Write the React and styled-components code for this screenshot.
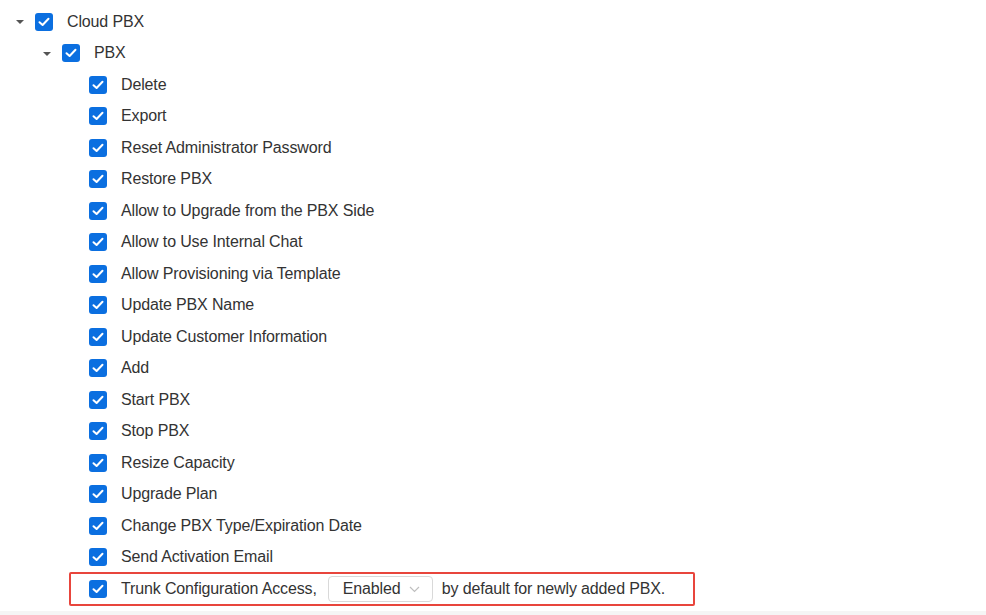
import React from 'react'
import styled, { createGlobalStyle } from 'styled-components'

const GlobalStyle = createGlobalStyle`
    html, body {
        margin: 0;
        padding: 0;
        background: #fff;
        overflow: hidden;
    }
    body {
        font-family: "Liberation Sans", Arial, sans-serif;
        color: #333;
    }
`

const Tree = styled.ul`
    list-style: none;
    margin: 0;
    padding: 6px 0 0 0;
`

const Row = styled.li`
    display: flex;
    align-items: center;
    height: 31.5px;
    padding-left: ${p => 8 + p.level * 27}px;
    font-size: 16px;
    letter-spacing: -0.14px;
    line-height: 1;
    white-space: nowrap;
`

const Switcher = styled.span`
    width: 24px;
    height: 18px;
    margin-right: 3px;
    display: flex;
    align-items: center;
    justify-content: center;
    flex: none;

    &::after {
        content: '';
        display: ${p => (p.open ? 'block' : 'none')};
        width: 0;
        height: 0;
        margin-top: 1px;
        border-left: 4px solid transparent;
        border-right: 4px solid transparent;
        border-top: 4px solid #555;
    }
`

const Box = styled.span`
    width: 18px;
    height: 18px;
    border-radius: 3px;
    background: #0b6fe0;
    display: flex;
    align-items: center;
    justify-content: center;
    flex: none;
    margin-right: 14px;
`

const Highlight = styled.div`
    display: flex;
    align-items: center;
    box-sizing: border-box;
    width: 626px;
    height: 34px;
    margin: -1px 0 -1.5px -20px;
    padding-left: 18px;
    border: 2px solid #e8453c;
    border-radius: 2px;
`

const Select = styled.span`
    display: inline-flex;
    align-items: center;
    box-sizing: border-box;
    height: 26px;
    width: 105px;
    margin: 0 9px 0 11px;
    padding: 0 12px 0 14px;
    border: 1px solid #d9d9d9;
    border-radius: 4px;
    color: #333;

    svg {
        margin-left: auto;
    }
`

const Footer = styled.div`
    position: fixed;
    left: 0;
    right: 0;
    bottom: 0;
    height: 4px;
    background: #f5f5f5;
`

const Check = () => (
    <Box>
        <svg width="12" height="10" viewBox="0 0 12 10" fill="none">
            <path d="M1.5 5.2L4.6 8L10.5 1.8" stroke="#fff" strokeWidth="2" strokeLinecap="round" strokeLinejoin="round" />
        </svg>
    </Box>
)

const items = [
    'Delete',
    'Export',
    'Reset Administrator Password',
    'Restore PBX',
    'Allow to Upgrade from the PBX Side',
    'Allow to Use Internal Chat',
    'Allow Provisioning via Template',
    'Update PBX Name',
    'Update Customer Information',
    'Add',
    'Start PBX',
    'Stop PBX',
    'Resize Capacity',
    'Upgrade Plan',
    'Change PBX Type/Expiration Date',
    'Send Activation Email',
]

export default function App() {
    return (
        <>
            <GlobalStyle />
            <Tree>
                <Row level={0}>
                    <Switcher open />
                    <Check />
                    Cloud PBX
                </Row>
                <Row level={1}>
                    <Switcher open />
                    <Check />
                    PBX
                </Row>
                {items.map(label => (
                    <Row level={2} key={label}>
                        <Switcher />
                        <Check />
                        {label}
                    </Row>
                ))}
                <Row level={2}>
                    <Switcher />
                    <Highlight>
                        <Check />
                        Trunk Configuration Access,
                        <Select>
                            Enabled
                            <svg width="11" height="7" viewBox="0 0 11 7" fill="none">
                                <path d="M1 1L5.5 5.5L10 1" stroke="#bfbfbf" strokeWidth="1.2" />
                            </svg>
                        </Select>
                        by default for newly added PBX.
                    </Highlight>
                </Row>
                <Row level={1}>
                    <Switcher />
                    <Check />
                </Row>
            </Tree>
            <Footer />
        </>
    )
}
